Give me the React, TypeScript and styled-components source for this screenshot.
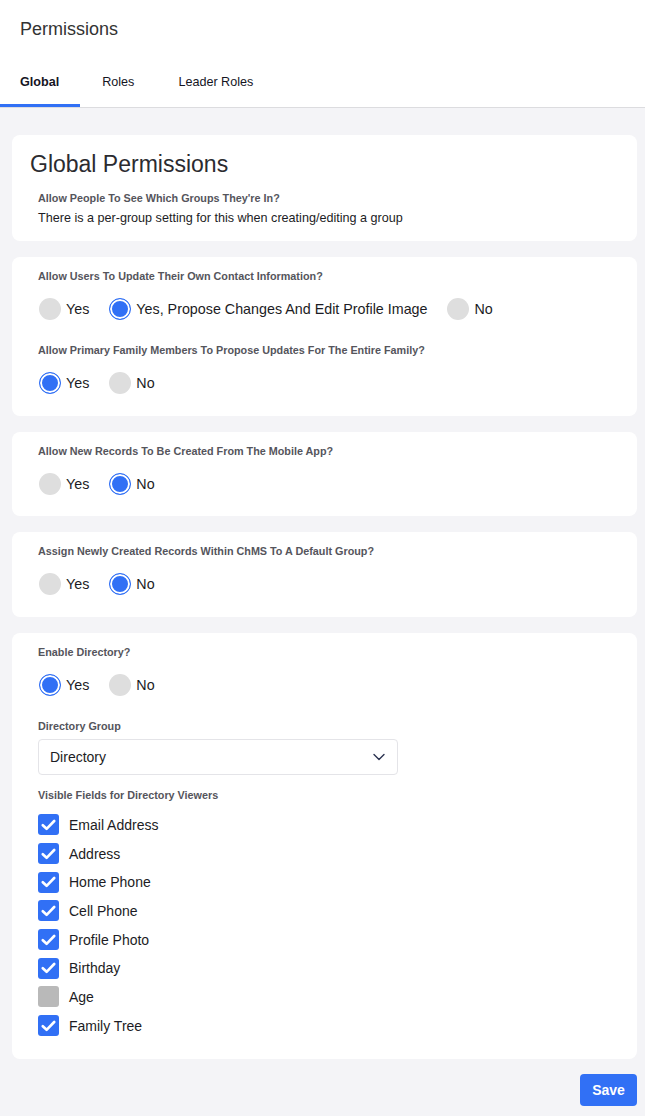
import React from "react";
import styled, { createGlobalStyle } from "styled-components";

const Global = createGlobalStyle`
  html, body { margin: 0; padding: 0; background: #f4f4f7; }
  body { font-family: "Liberation Sans", Arial, sans-serif; color: #1c1c24; }
  * { box-sizing: border-box; }
`;

const Page = styled.div`
  width: 645px;
  min-height: 1116px;
  background: #f4f4f7;
`;

const Header = styled.header`
  background: #fff;
  border-bottom: 1px solid #dcdcdf;
`;

const PageTitle = styled.h1`
  margin: 0;
  padding: 18px 20px 0;
  height: 56px;
  font-size: 18px;
  line-height: 22px;
  font-weight: 400;
  color: #333;
`;

const Tabs = styled.nav`
  display: flex;
  height: 51px;
`;

const Tab = styled.div<{ $active?: boolean }>`
  padding: 4px 22px 0;
  &:first-child { padding-left: 20px; padding-right: 21px; }
  display: flex;
  align-items: center;
  font-size: 12.6px;
  font-weight: ${(p) => (p.$active ? 700 : 400)};
  color: #15151f;
  border-bottom: 3px solid ${(p) => (p.$active ? "#3170f5" : "transparent")};
`;

const Content = styled.main`
  padding: 27px 8px 9px 12px;
  display: flex;
  flex-direction: column;
  gap: 16px;
`;

const Card = styled.section<{ $pb?: number }>`
  background: #fff;
  border-radius: 8px;
  padding: 12px 18px ${(p) => p.$pb ?? 21.5}px;
`;

const CardTitle = styled.h2`
  margin: 4px 0 14px;
  font-size: 23px;
  line-height: 26px;
  font-weight: 400;
  color: #2b2b30;
`;

const Field = styled.div<{ $mt?: number }>`
  padding: 0 8px;
  margin-top: ${(p) => p.$mt ?? 0}px;
`;

const Label = styled.div`
  font-size: 10.8px;
  line-height: 14px;
  font-weight: 700;
  color: #55555c;
`;

const Text = styled.div`
  margin-top: 4px;
  font-size: 12.6px;
  line-height: 18px;
  color: #1c1c24;
`;

const RadioRow = styled.div<{ $mt?: number }>`
  display: flex;
  align-items: center;
  gap: 19px;
  margin-top: ${(p) => p.$mt ?? 15}px;
`;

const RadioOption = styled.label`
  display: flex;
  align-items: center;
  gap: 5px;
  font-size: 14.3px;
  line-height: 22px;
  color: #1c1c24;
`;

const RadioDot = styled.span<{ $checked?: boolean }>`
  width: 22px;
  height: 22px;
  border-radius: 50%;
  margin-left: 1px;
  background: ${(p) => (p.$checked ? "#3170f5" : "#dedede")};
  border: ${(p) => (p.$checked ? "1.5px solid #3170f5" : "none")};
  box-shadow: ${(p) => (p.$checked ? "inset 0 0 0 2px #fff" : "none")};
`;

const Select = styled.div`
  margin-top: 6px;
  width: 360px;
  height: 36px;
  border: 1px solid #e4e4e8;
  border-radius: 4px;
  display: flex;
  align-items: center;
  justify-content: space-between;
  padding: 0 11px 0 11px;
  font-size: 14px;
  color: #1c1c24;
`;

const CheckList = styled.div`
  margin-top: 9px;
  display: flex;
  flex-direction: column;
`;

const CheckRow = styled.label`
  display: flex;
  align-items: center;
  gap: 10px;
  height: 28.7px;
  font-size: 14px;
  color: #1c1c24;
`;

const Box = styled.span<{ $checked?: boolean }>`
  width: 21px;
  height: 21px;
  border-radius: 3px;
  background: ${(p) => (p.$checked ? "#3170f5" : "#b9b9b9")};
  display: flex;
  align-items: center;
  justify-content: center;
`;

const Footer = styled.div`
  display: flex;
  justify-content: flex-end;
  padding: 0 8px 0 12px;
  margin-top: 6px;
`;

const SaveButton = styled.button`
  width: 57px;
  height: 32px;
  border: none;
  border-radius: 4px;
  background: #3170f5;
  color: #fff;
  font-family: "Liberation Sans", Arial, sans-serif;
  font-size: 14px;
  font-weight: 700;
`;

const Radio = ({ label, checked }: { label: string; checked?: boolean }) => (
  <RadioOption>
    <RadioDot $checked={checked} />
    {label}
  </RadioOption>
);

const Check = () => (
  <svg width="15" height="12" viewBox="0 0 15 12" fill="none">
    <path d="M1.8 6.2 L5.6 9.8 L13.2 2" stroke="#fff" strokeWidth="2.6" strokeLinecap="round" strokeLinejoin="round" />
  </svg>
);

const Checkbox = ({ label, checked }: { label: string; checked?: boolean }) => (
  <CheckRow>
    <Box $checked={checked}>{checked && <Check />}</Box>
    {label}
  </CheckRow>
);

const Chevron = () => (
  <svg width="14" height="14" viewBox="0 0 14 14" fill="none">
    <path d="M2 4.5 L7 9.5 L12 4.5" stroke="#2b3350" strokeWidth="1.4" strokeLinecap="round" strokeLinejoin="round" />
  </svg>
);

const fields: [string, boolean][] = [
  ["Email Address", true],
  ["Address", true],
  ["Home Phone", true],
  ["Cell Phone", true],
  ["Profile Photo", true],
  ["Birthday", true],
  ["Age", false],
  ["Family Tree", true],
];

export default function App() {
  return (
    <Page>
      <Global />
      <Header>
        <PageTitle>Permissions</PageTitle>
        <Tabs>
          <Tab $active>Global</Tab>
          <Tab>Roles</Tab>
          <Tab>Leader Roles</Tab>
        </Tabs>
      </Header>
      <Content>
        <Card $pb={14}>
          <CardTitle>Global Permissions</CardTitle>
          <Field>
            <Label>Allow People To See Which Groups They're In?</Label>
            <Text>There is a per-group setting for this when creating/editing a group</Text>
          </Field>
        </Card>

        <Card>
          <Field>
            <Label>Allow Users To Update Their Own Contact Information?</Label>
            <RadioRow>
              <Radio label="Yes" />
              <Radio label="Yes, Propose Changes And Edit Profile Image" checked />
              <Radio label="No" />
            </RadioRow>
          </Field>
          <Field $mt={23}>
            <Label>Allow Primary Family Members To Propose Updates For The Entire Family?</Label>
            <RadioRow>
              <Radio label="Yes" checked />
              <Radio label="No" />
            </RadioRow>
          </Field>
        </Card>

        <Card>
          <Field>
            <Label>Allow New Records To Be Created From The Mobile App?</Label>
            <RadioRow>
              <Radio label="Yes" />
              <Radio label="No" checked />
            </RadioRow>
          </Field>
        </Card>

        <Card>
          <Field>
            <Label>Assign Newly Created Records Within ChMS To A Default Group?</Label>
            <RadioRow>
              <Radio label="Yes" />
              <Radio label="No" checked />
            </RadioRow>
          </Field>
        </Card>

        <Card $pb={19}>
          <Field>
            <Label>Enable Directory?</Label>
            <RadioRow $mt={15}>
              <Radio label="Yes" checked />
              <Radio label="No" />
            </RadioRow>
          </Field>
          <Field $mt={23}>
            <Label>Directory Group</Label>
            <Select>
              Directory
              <Chevron />
            </Select>
          </Field>
          <Field $mt={13}>
            <Label>Visible Fields for Directory Viewers</Label>
            <CheckList>
              {fields.map(([l, c]) => (
                <Checkbox key={l} label={l} checked={c} />
              ))}
            </CheckList>
          </Field>
        </Card>
      </Content>
      <Footer>
        <SaveButton>Save</SaveButton>
      </Footer>
    </Page>
  );
}
